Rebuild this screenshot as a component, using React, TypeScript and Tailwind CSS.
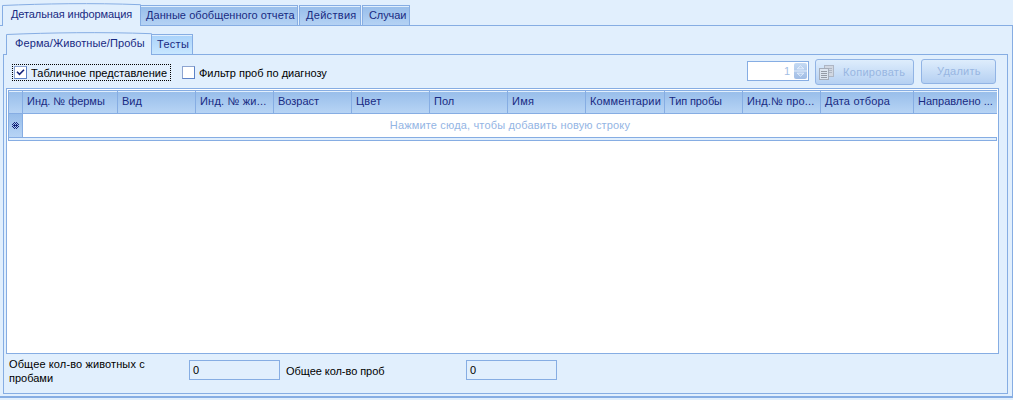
import React from "react";

const columns = [
  { label: "Инд. № фермы", cls: "w-[95px]", text: "tracking-[-0.03px]" },
  { label: "Вид", cls: "w-[78px]", text: "tracking-[0px]" },
  { label: "Инд. № жи...", cls: "w-[78px]", text: "tracking-[0.2px]" },
  { label: "Возраст", cls: "w-[78px]", text: "tracking-[0px]" },
  { label: "Цвет", cls: "w-[78px]", text: "tracking-[0.2px]" },
  { label: "Пол", cls: "w-[78px]", text: "tracking-[0px]" },
  { label: "Имя", cls: "w-[78px]", text: "tracking-[0.3px]" },
  { label: "Комментарии", cls: "w-[79px]", text: "tracking-[0.15px]" },
  { label: "Тип пробы", cls: "w-[78px]", text: "tracking-[-0.1px]" },
  { label: "Инд.№ про...", cls: "w-[78px]", text: "tracking-[0.15px]" },
  { label: "Дата отбора", cls: "w-[93px]", text: "tracking-[0.2px]" },
  { label: "Направлено ...", cls: "w-[83px]", text: "tracking-[0px]" },
];

function ActiveTab({ label, width, pad, text }: { label: string; width: number; pad: string; text: string }) {
  return (
    <div className={`relative -mb-px h-[23px] bg-[#e1effd] ${pad}`} style={{ width }}>
      <svg className="absolute inset-0" width={width} height="23" fill="none" stroke="#86ade3">
        <path d={`M.5 23V2.5C${width * 0.3} .7 ${width * 0.65} -.2 ${width - 0.5} 1.7V23`} />
      </svg>
      <span className={`relative ${text}`}>{label}</span>
    </div>
  );
}

function Tab({ label, cls }: { label: string; cls: string }) {
  return (
    <div className={`h-[20px] border border-b-0 border-[#86ade3] shadow-[inset_0_1px_0_#e1effd] ${cls}`}>
      {label}
    </div>
  );
}

function CopyIcon() {
  return (
    <svg width="16" height="17" shapeRendering="crispEdges">
      <rect x="5.5" y="1.5" width="9" height="11" fill="#d0d7e2" stroke="#aeb6c4" />
      <path d="M7 4.5h6M7 6.5h6M7 8.5h6" stroke="#aeb6c4" />
      <rect x=".5" y="4.5" width="9" height="11" fill="#dce5f0" stroke="#a5adba" />
      <path d="M2 7.5h6M2 9.5h6M2 11.5h6M2 13.5h6" stroke="#959ba6" />
    </svg>
  );
}

export default function App() {
  return (
    <div className="flex h-[400px] w-[1013px] flex-col overflow-hidden bg-[#e1effd] pt-[3px] font-['Liberation_Sans',Arial,sans-serif] text-[11px] leading-[13px] whitespace-nowrap text-[#182a82]">
      <div className="z-10 flex h-[22px] items-end pl-[2px]">
        <ActiveTab label="Детальная информация" width={139} pad="pl-[9px] pt-[5px]" text="tracking-[-0.1px]" />
        <Tab label="Данные обобщенного отчета" cls="w-[157px] bg-linear-to-b from-[#97bdea] to-[#b4d2f4] pl-[5px] pt-[3px] tracking-[0.05px] border-l-0" />
        <Tab label="Действия" cls="ml-px w-[62px] bg-linear-to-b from-[#97bdea] to-[#b4d2f4] pl-[6px] pt-[3px] tracking-[0.3px]" />
        <Tab label="Случаи" cls="ml-px w-[48px] bg-linear-to-b from-[#97bdea] to-[#b4d2f4] pl-[6px] pt-[3px] tracking-[-0.1px]" />
      </div>
      <div className="flex h-[373px] flex-col border-t border-r border-b-2 border-[#86ade3] pt-[7px] pl-[3px]">
        <div className="z-10 flex h-[21px] items-end pl-[3px]">
          <ActiveTab label="Ферма/Животные/Пробы" width={146} pad="pl-[9px] pt-[5px]" text="tracking-[0.1px]" />
          <Tab label="Тесты" cls="w-[41px] border-l-0 bg-linear-to-b from-[#a9d2fa] to-[#c8e7ff] pl-[5px] pt-[3px] tracking-[0.3px]" />
        </div>
        <div className="h-[340px] w-[1005px] border border-[#86ade3] pl-[2px]">
          <div className="flex h-[33px] pt-[3px] text-black">
            <div className="mt-[6px] ml-[6px] flex h-[17px] w-[159px] items-center border border-dotted border-black pl-[1px]">
              <span className="flex size-[13px] items-center justify-center border border-[#5c82c7] border-t-[#8da4d0] border-l-[#8da4d0] bg-white">
                <svg width="9" height="9" fill="none" stroke="#14247a" strokeWidth="1.6">
                  <path d="M1 3.8l2.5 2.5L8 1.8" />
                </svg>
              </span>
              <span className="mt-[2px] ml-[4px] tracking-[0.04px]">Табличное представление</span>
            </div>
            <span className="mt-[8px] ml-[11px] size-[13px] border border-[#5c82c7] border-t-[#8da4d0] border-l-[#8da4d0] bg-white" />
            <span className="mt-[9px] ml-[4px] tracking-[0px]">Фильтр проб по диагнозу</span>
            <div className="mt-[3px] ml-auto flex h-[20px] w-[62px] items-center border border-[#86ade3] bg-white pr-px text-[#a2bee5]">
              <span className="ml-[36px] w-[10px]">1</span>
              <svg className="ml-auto" width="13" height="16">
                <defs>
                  <linearGradient id="sp" x2="0" y2="1">
                    <stop stopColor="#c5daf3" />
                    <stop offset="1" stopColor="#a1bde5" />
                  </linearGradient>
                </defs>
                <rect width="13" height="16" rx="2" fill="url(#sp)" />
                <path d="M0 8h13M3.2 5.8l3.3-3 3.3 3zM3.2 10.2l3.3 3 3.3-3z" fill="none" stroke="#e6f1fe" strokeWidth=".9" />
              </svg>
            </div>
            <div className="mt-[1px] ml-[6px] flex h-[26px] w-[99px] rounded-[3px] border border-[#91b4e5] bg-linear-to-b from-[#deedfc] to-[#b5d0f2] pt-[4px] pl-[3px] text-[#98b6e2]">
              <CopyIcon />
              <span className="mt-[2px] ml-[8px] tracking-[0.3px]">Копировать</span>
            </div>
            <div className="mt-[1px] mr-[11px] ml-[7px] h-[25px] w-[75px] rounded-[3px] border border-[#91b4e5] bg-linear-to-b from-[#deedfc] to-[#b5d0f2] pt-[5px] pl-[15px] tracking-[0.25px] text-[#98b6e2]">
              Удалить
            </div>
          </div>
          <div className="h-[266px] w-[993px] border border-[#86ade3] bg-white">
            <div className="mt-px ml-px flex h-[24px] w-[989px] border-y border-l border-[#86ade3] bg-linear-to-b from-[#97bdea] to-[#b7d4f5] shadow-[inset_0_1px_0_#e1effd]">
              <div className="w-[14px] shrink-0 border-r border-[#86ade3]" />
              {columns.map((c, i) => (
                <div key={i} className={`shrink-0 border-r border-[#86ade3] pt-[4px] pl-[4px] last:border-r-0 ${c.cls} ${c.text}`}>
                  {c.label}
                </div>
              ))}
            </div>
            <div className="ml-px flex h-[23px] w-[989px]">
              <div className="flex w-[15px] items-center justify-center border-x border-[#86ade3] bg-linear-to-b from-[#97bdea] to-[#b7d4f5]">
                <svg width="7" height="7" fill="#14247a" shapeRendering="crispEdges">
                  <path d="M2 0h1v1h-1zM4 0h1v1h-1zM1 1h1v1h-1zM3 1h1v1h-1zM5 1h1v1h-1zM0 2h1v1h-1zM2 2h1v1h-1zM4 2h1v1h-1zM6 2h1v1h-1zM1 3h5v1h-5zM0 4h1v1h-1zM2 4h1v1h-1zM4 4h1v1h-1zM6 4h1v1h-1zM1 5h1v1h-1zM3 5h1v1h-1zM5 5h1v1h-1zM2 6h1v1h-1zM4 6h1v1h-1z" />
                </svg>
              </div>
              <div className="flex-1 pt-[5px] text-center tracking-[0.16px] text-[#94b5e4]">
                Нажмите сюда, чтобы добавить новую строку
              </div>
            </div>
            <div className="ml-px h-[4px] w-[989px] border border-[#86ade3] bg-[#e1effd]" />
          </div>
          <div className="flex pt-[3px] pl-[3px] text-black">
            <div className="w-[180px] leading-[14px] tracking-[0.12px]">
              Общее кол-во животных с<br />
              <span className="tracking-[0px]">пробами</span>
            </div>
            <div className="mt-[3px] h-[20px] w-[91px] border border-[#86ade3] pt-[3px] pl-[3px]">0</div>
            <div className="mt-[8px] ml-[6px] w-[180px] tracking-[-0.05px]">Общее кол-во проб</div>
            <div className="mt-[3px] h-[20px] w-[91px] border border-[#86ade3] pt-[3px] pl-[3px]">0</div>
          </div>
        </div>
      </div>
    </div>
  );
}
